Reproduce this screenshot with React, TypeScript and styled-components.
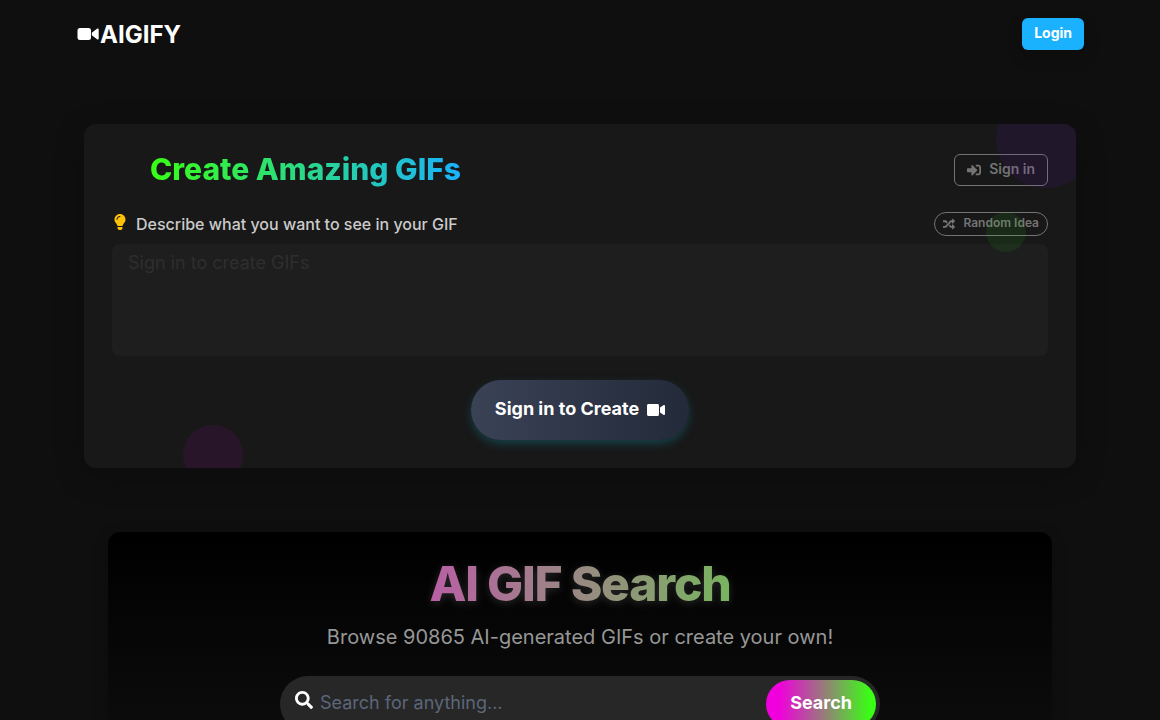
import React from "react";
import styled, { createGlobalStyle } from "styled-components";
import { FaLightbulb, FaRandom, FaSearch, FaSignInAlt, FaVideo } from "react-icons/fa";

const GlobalStyle = createGlobalStyle`
  *, *::before, *::after { box-sizing: border-box; }
  body {
    margin: 0;
    background: #0f0f0f;
    color: #ffffff;
    font-family: Inter, "Liberation Sans", sans-serif;
    font-size: 16px;
    line-height: 24px;
  }
  h1, h2, p { margin: 0; }
  button, input, textarea { font-family: inherit; }
`;

const Navbar = styled.header`
  display: flex;
  align-items: center;
  justify-content: space-between;
  height: 68px;
  padding: 0 76px;
`;

const Brand = styled.a`
  display: flex;
  align-items: center;
  color: #ffffff;
  font-size: 24px;
  font-weight: 700;
  line-height: 32px;
  text-decoration: none;
`;

const BrandName = styled.span`
  padding-top: 2px;
`;

const LoginButton = styled.button`
  height: 32px;
  padding: 0 12px 3px;
  border: 0;
  border-radius: 6px;
  background: #1ab2ff;
  color: #ffffff;
  font-size: 14px;
  font-weight: 700;
  box-shadow: 0 8px 16px rgba(0, 0, 0, 0.2);
`;

const Main = styled.main`
  display: flex;
  flex-direction: column;
  gap: 64px;
  padding: 56px 84px 64px;
`;

const CreateCard = styled.section`
  position: relative;
  display: flex;
  flex-direction: column;
  padding: 28px;
  overflow: hidden;
  border-radius: 12px;
  background: #181818;
`;

const CardShadow = styled.div`
  border-radius: 12px;
  box-shadow: 0 8px 32px rgba(0, 0, 0, 0.2);
`;

const Bubble = styled.span<{ $size: number; $color: string; $place: string }>`
  position: absolute;
  ${(p) => p.$place}
  width: ${(p) => p.$size}px;
  height: ${(p) => p.$size}px;
  border-radius: 50%;
  background: ${(p) => p.$color};
  pointer-events: none;
`;

const Row = styled.div`
  display: flex;
  align-items: center;
  justify-content: space-between;
`;

const CardTitle = styled.h2`
  margin-left: 38px;
  padding-bottom: 2px;
  background: linear-gradient(to right, #39ff14, #1ab2ff);
  background-clip: text;
  color: transparent;
  font-size: 30px;
  font-weight: 800;
  line-height: 34px;
`;

const OutlineButton = styled.button<{ $pill?: boolean }>`
  display: flex;
  align-items: center;
  gap: 8px;
  height: ${(p) => (p.$pill ? 24 : 32)}px;
  padding: 0 ${(p) => (p.$pill ? 8 : 12)}px;
  border: 1px solid #747474;
  border-radius: ${(p) => (p.$pill ? 12 : 6)}px;
  background: transparent;
  color: #747474;
  font-size: ${(p) => (p.$pill ? 12 : 14)}px;
  font-weight: 600;
`;

const ButtonText = styled.span`
  padding-bottom: 3px;
`;

const PromptRow = styled(Row)`
  margin: 24px 0 8px;
`;

const PromptLabel = styled.label`
  display: flex;
  gap: 8px;
  color: #cbcbcb;
  font-weight: 500;

  svg {
    margin-top: 2px;
    color: #ffc107;
  }
`;

const PromptBox = styled.textarea`
  display: block;
  width: 100%;
  height: 112px;
  padding: 8px 16px;
  border: 0;
  border-radius: 8px;
  background: #1e1e1e;
  color: #ffffff;
  font-size: 18px;
  line-height: 22px;
  resize: none;

  &::placeholder {
    color: #2e2e2e;
    opacity: 1;
  }
`;

const CreateButton = styled.button`
  display: flex;
  align-items: center;
  align-self: center;
  gap: 8px;
  height: 60px;
  margin-top: 24px;
  padding: 0 24px;
  border: 0;
  border-radius: 30px;
  background: linear-gradient(to right, #3a4256, #232a39);
  box-shadow: 0 4px 8px rgba(20, 120, 140, 0.4);
  color: #ffffff;
  font-size: 18px;
  font-weight: 700;
`;

const SearchSection = styled.section`
  display: flex;
  flex-direction: column;
  align-items: center;
  margin: 0 24px;
  padding: 24px 24px 48px;
  border-radius: 12px;
  background: linear-gradient(to bottom, #000000, #0f0f0f);
  box-shadow: 0 4px 16px rgba(0, 0, 0, 0.2);
`;

const SearchTitle = styled.h1`
  padding-bottom: 2px;
  background: linear-gradient(to right, #b95fa5, #78b45f);
  background-clip: text;
  color: transparent;
  filter: drop-shadow(0 2px 4px rgba(255, 255, 255, 0.15));
  font-size: 48px;
  font-weight: 800;
  letter-spacing: -0.025em;
  line-height: 56px;
`;

const Subtitle = styled.p`
  margin: 8px 0 24px;
  color: #979797;
  font-size: 20px;
  line-height: 30px;
`;

const SearchBar = styled.form`
  display: flex;
  align-items: center;
  width: 100%;
  max-width: 600px;
  padding: 4px;
  border-radius: 28px;
  background: #272727;
`;

const SearchLabel = styled.label`
  display: flex;
  padding: 0 7px 8px 11px;
`;

const SearchInput = styled.input`
  flex: 1;
  min-width: 0;
  height: 48px;
  padding: 0 0 3px;
  border: 0;
  background: transparent;
  color: #ffffff;
  font-size: 18px;

  &::placeholder {
    color: #5c667a;
    opacity: 1;
  }
`;

const SearchButton = styled.button`
  height: 48px;
  padding: 0 24px 3px;
  border: 0;
  border-radius: 24px;
  background: linear-gradient(to right, #f000dc 12%, #39ff14 95%);
  color: #ffffff;
  font-size: 18px;
  font-weight: 700;
`;

function CameraMark() {
  return (
    <svg width="24" height="24" viewBox="0 0 24 24" fill="currentColor" aria-hidden="true">
      <rect x="1.5" y="6" width="13.5" height="12" rx="2.5" />
      <path d="M16.4 10.2 21 6.8c.8-.6 1.7-.2 1.7.8v8.8c0 1-.9 1.4-1.7.8l-4.6-3.4c-.4-.3-.6-.7-.6-1.2v-1.2c0-.5.2-.9.6-1.2z" />
    </svg>
  );
}

export default function App() {
  return (
    <>
      <GlobalStyle />
      <Navbar>
        <Brand href="#">
          <CameraMark />
          <BrandName>AIGIFY</BrandName>
        </Brand>
        <LoginButton type="button">Login</LoginButton>
      </Navbar>
      <Main>
        <CardShadow>
          <CreateCard>
            <Row>
              <CardTitle>Create Amazing GIFs</CardTitle>
              <OutlineButton type="button">
                <FaSignInAlt aria-hidden="true" />
                <ButtonText>Sign in</ButtonText>
              </OutlineButton>
            </Row>
            <PromptRow>
              <PromptLabel htmlFor="prompt">
                <FaLightbulb aria-hidden="true" />
                Describe what you want to see in your GIF
              </PromptLabel>
              <OutlineButton type="button" $pill>
                <FaRandom aria-hidden="true" />
                <ButtonText>Random Idea</ButtonText>
              </OutlineButton>
            </PromptRow>
            <PromptBox id="prompt" placeholder="Sign in to create GIFs" />
            <CreateButton type="button">
              <ButtonText>Sign in to Create</ButtonText>
              <FaVideo aria-hidden="true" />
            </CreateButton>
            <Bubble $size={100} $color="rgba(120, 20, 220, 0.1)" $place="top: -36px; right: -20px;" />
            <Bubble $size={40} $color="rgba(57, 255, 20, 0.08)" $place="top: 88px; right: 5%;" />
            <Bubble $size={60} $color="rgba(200, 0, 200, 0.1)" $place="bottom: -17px; left: 10%;" />
          </CreateCard>
        </CardShadow>
        <SearchSection>
          <SearchTitle>AI GIF Search</SearchTitle>
          <Subtitle>Browse 90865 AI-generated GIFs or create your own!</Subtitle>
          <SearchBar>
            <SearchLabel htmlFor="search" aria-label="Search GIFs">
              <FaSearch size={18} aria-hidden="true" />
            </SearchLabel>
            <SearchInput id="search" type="text" placeholder="Search for anything..." />
            <SearchButton type="submit">Search</SearchButton>
          </SearchBar>
        </SearchSection>
      </Main>
    </>
  );
}
